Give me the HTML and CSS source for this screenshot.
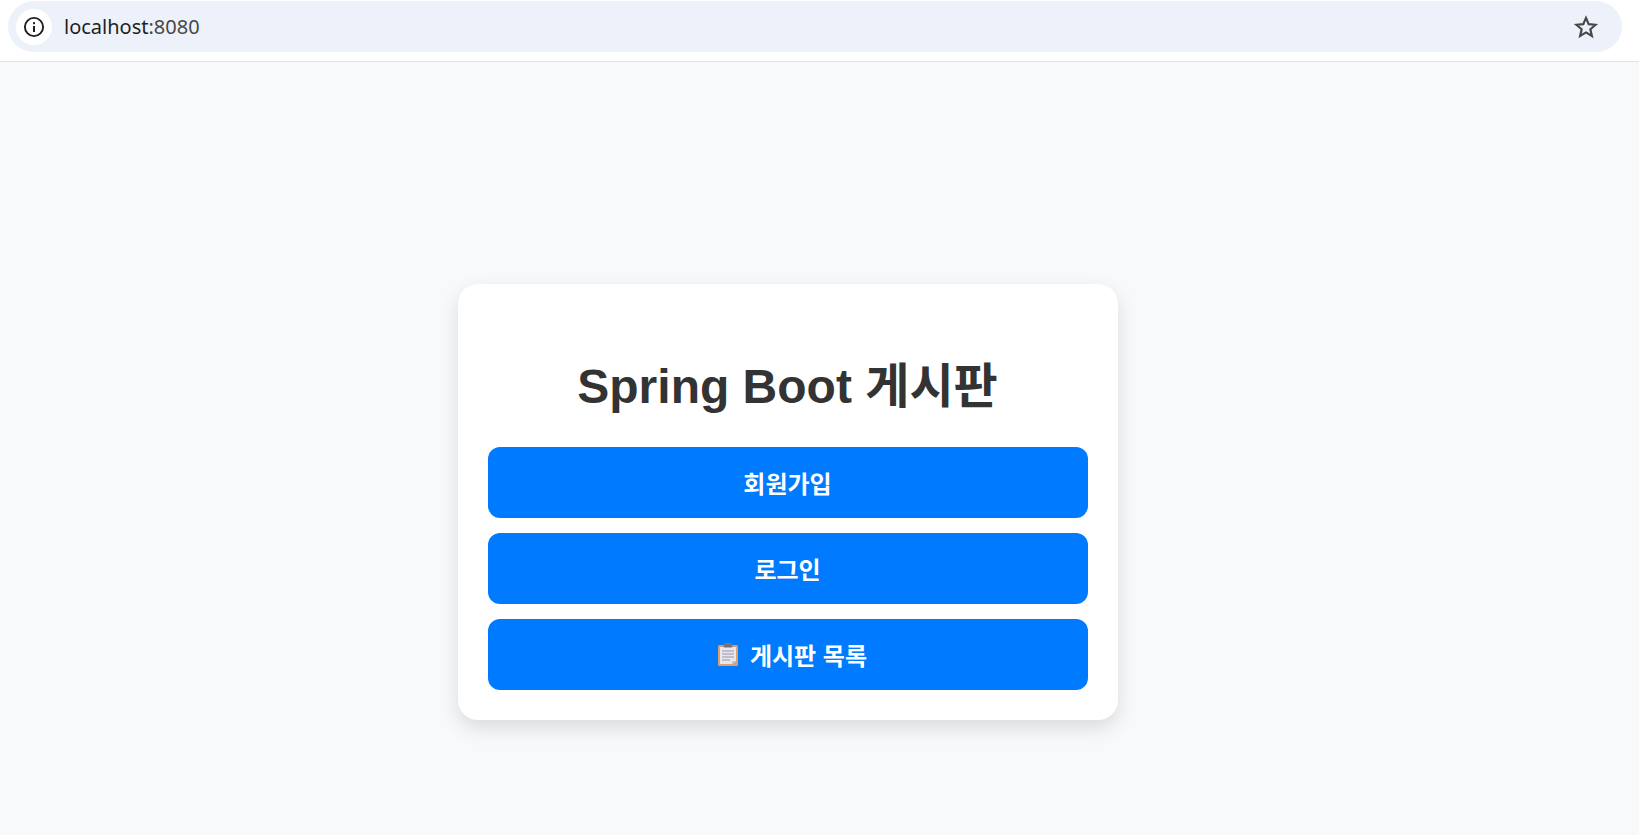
FILE: index.html
```html
<!DOCTYPE html>
<html lang="ko">
<head>
    <meta charset="UTF-8">
    <title>Spring Boot 게시판</title>
    <link rel="stylesheet" href="styles.css">
</head>
<body>
    <div class="toolbar">
        <div class="omnibox">
            <div class="site-info">
                <svg class="info-icon" width="22" height="22" viewBox="0 0 22 22">
                    <circle cx="11" cy="11" r="9.1" fill="none" stroke="#1f1f1f" stroke-width="1.9"/>
                    <rect x="10" y="10" width="2" height="6" fill="#1f1f1f"/>
                    <rect x="10" y="6.2" width="2" height="2" fill="#1f1f1f"/>
                </svg>
            </div>
            <div class="url">localhost<span class="url-port">:8080</span></div>
            <svg class="star-icon" width="26" height="26" viewBox="0 0 24 24">
                <path d="M12 3.6l2.5 5.8 6.3.55-4.8 4.15 1.45 6.15L12 17l-5.45 3.25L8 14.1 3.2 9.95l6.3-.55z" fill="none" stroke="#474747" stroke-width="2" stroke-linejoin="miter"/>
            </svg>
        </div>
    </div>

    <div class="page">
        <div class="card">
            <h1 class="title">Spring Boot 게시판</h1>
            <a class="btn" href="#">회원가입</a>
            <a class="btn" href="#">로그인</a>
            <a class="btn btn-list" href="#">
                <svg class="clipboard" width="20" height="23" viewBox="0 0 20 23">
                    <rect x="0" y="2" width="20" height="21" rx="1.5" fill="#dd9f6c"/>
                    <path d="M2 4h16v14l-4 3H2z" fill="#e9e6f0"/>
                    <path d="M14 21v-3h4z" fill="#c9c4d4"/>
                    <rect x="5.5" y="0" width="9" height="4.5" rx="1" fill="#77727f"/>
                    <path d="M4 8h12M4 11h12M4 14h12M4 17h8" stroke="#9a96a6" stroke-width="1.2"/>
                </svg>
                게시판 목록
            </a>
        </div>
    </div>
</body>
</html>
```

FILE: styles.css
```css
* {
    box-sizing: border-box;
}

html, body {
    height: 100%;
}

body {
    margin: 0;
    display: flex;
    flex-direction: column;
    overflow: hidden;
    background-color: #f8f9fa;
    font-family: "Liberation Sans", "Noto Sans CJK KR", Arial, sans-serif;
}

/* Browser bar */
.toolbar {
    height: 62px;
    padding: 1px 17px 9px 8px;
    background-color: #fff;
    border-bottom: 1px solid #e1e3e6;
}

.omnibox {
    height: 51px;
    display: flex;
    align-items: center;
    padding: 0 23px 0 8px;
    background-color: #edf2fa;
    border-radius: 26px;
}

.site-info {
    width: 36px;
    height: 36px;
    display: flex;
    justify-content: center;
    align-items: center;
    background-color: #fff;
    border-radius: 50%;
}

.url {
    flex: 1;
    margin-left: 12px;
    font-family: "Noto Sans", "Noto Sans CJK KR", sans-serif;
    font-size: 20px;
    color: #1f1f1f;
}

.url-port {
    color: #474747;
}

/* Main card */
.page {
    flex: 1;
    display: flex;
    justify-content: center;
    align-items: flex-start;
    padding: 222px 64px 0 0;
}

.card {
    width: 660px;
    padding: 30px;
    display: flex;
    flex-direction: column;
    gap: 15px;
    background-color: #fff;
    border-radius: 20px;
    box-shadow: 0 8px 20px rgba(0,0,0,0.12);
}

.title {
    margin: 37px 0 9px;
    text-align: center;
    font-size: 48px;
    line-height: 72px;
    font-weight: bold;
    color: #333;
}

.btn {
    height: 71px;
    display: flex;
    justify-content: center;
    align-items: center;
    gap: 12px;
    background-color: #007bff;
    border-radius: 12px;
    color: #fff;
    font-size: 24px;
    font-weight: bold;
    text-decoration: none;
}

.btn-list {
    padding-left: 10px;
}
```
